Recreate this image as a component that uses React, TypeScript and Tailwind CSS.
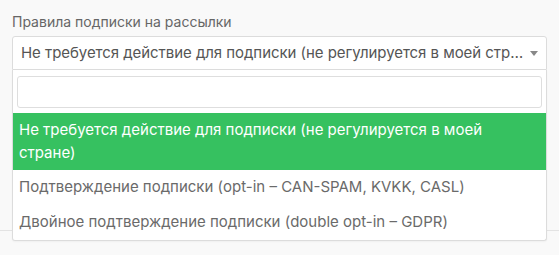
import React from "react";

const options = [
  "Не требуется действие для подписки (не регулируется в моей стране)",
  "Подтверждение подписки (opt-in – CAN-SPAM, KVKK, CASL)",
  "Двойное подтверждение подписки (double opt-in – GDPR)",
];

export default function App() {
  return (
    <div
      className="h-[255px] w-[559px] overflow-hidden bg-[#f9f9f9]"
      style={{ fontFamily: "Inter, 'Noto Sans', sans-serif" }}
    >
      <div className="relative h-[231px] border-b border-[#e3e3e3]">
        <div className="px-3 pt-[13px]">
          <label className="block text-[14px] leading-[17px] text-[#666]">
            Правила подписки на рассылки
          </label>
          <div className="relative mt-[6px]">
            <div className="flex h-[34px] items-center rounded-t-[3px] border border-[#dcdcdc] bg-white pl-2 pr-[20px]">
              <span className="truncate text-[15px] tracking-[-0.05px] text-[#555]">{options[0]}</span>
              <span className="absolute right-[9px] top-[15px] h-0 w-0 border-x-[4px] border-t-[5px] border-x-transparent border-t-[#888]" />
            </div>
            <div className="absolute left-0 right-0 top-[34px] z-10 rounded-b-[3px] border border-t-0 border-[#dcdcdc] bg-white pb-px shadow-[0_1px_2px_rgba(0,0,0,0.04)]">
              <div className="px-1 pb-[5px] pt-[6px]">
                <input
                  className="block h-[32px] w-full rounded-[3px] border border-[#dedede] bg-white px-2 text-[15px] outline-none"
                  type="text"
                />
              </div>
              <ul className="text-[15px] leading-[22.5px]">
                {options.map((o, i) => (
                  <li
                    key={o}
                    className={
                      i === 0
                        ? "bg-[#36c160] px-1.5 py-1.5 text-white"
                        : "px-1.5 py-1.5 text-[#6a6a6a]"
                    }
                  >
                    {o}
                  </li>
                ))}
              </ul>
            </div>
          </div>
        </div>
      </div>
    </div>
  );
}
